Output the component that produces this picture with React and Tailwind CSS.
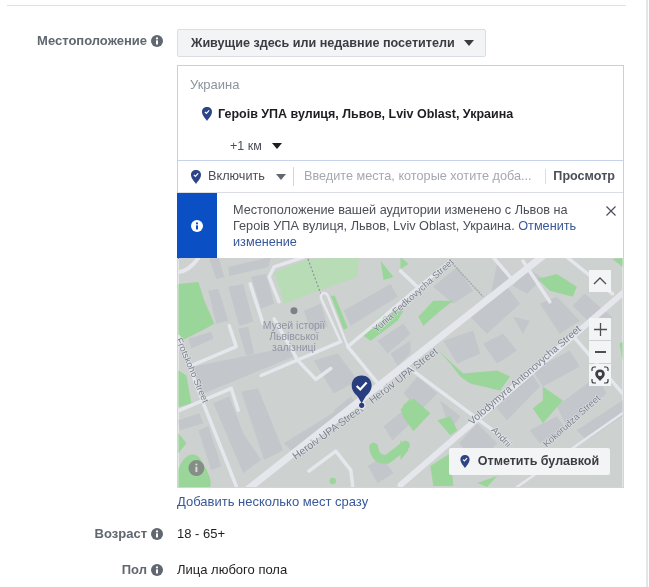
import React from 'react';

const font = { fontFamily: '"Liberation Sans", Arial, sans-serif' };

function InfoDot({ className = 'w-[12px] h-[12px] text-[#606770]', cut = 'white' }) {
  return (
    <svg viewBox="0 0 12 12" className={className}>
      <circle cx="6" cy="6" r="6" fill="currentColor" />
      <circle cx="6" cy="3.4" r="1.1" fill={cut} />
      <rect x="5" y="5.2" width="2" height="4.4" rx="0.5" fill={cut} />
    </svg>
  );
}

function Pin({ className = 'w-[10px] h-[14px]' }) {
  return (
    <svg viewBox="0 0 10 14" className={className}>
      <path d="M5 0C7.9 0 10 2 10 4.8C10 8.4 7 11 5 14C3 11 0 8.4 0 4.8C0 2 2.1 0 5 0Z" fill="#2d4486" />
      <path d="M2.9 4.9L4.4 6.4L7.2 3.4" stroke="white" strokeWidth="1.2" fill="none" />
    </svg>
  );
}

function Caret({ className = 'border-t-[#3a3d42]' }) {
  return <span className={`inline-block w-0 h-0 border-x-[5px] border-x-transparent border-t-[6px] ${className}`} />;
}

const buildings = [
  '30,33 40,31 50,63 38,66',
  '50,29 65,26 75,64 61,68',
  '31,1 40,-1 46,19 38,21',
  '50,9 93,-1 90,9 51,18',
  '73,19 88,16 96,46 83,51',
  '60,71 70,69 76,96 68,98',
  '10,81 33,74 35,81 13,91',
  '16,109 113,89 116,99 20,138',
  '63,134 80,131 105,193 86,203',
  '35,146 51,139 65,176 83,203 65,216',
  '0,163 21,156 25,166 1,173',
  '20,173 30,169 43,209 33,213',
  '106,186 166,149 176,159 116,196',
  '136,103 160,96 180,123 156,136',
  '156,153 173,139 180,148 163,159',
  '166,53 213,26 220,39 173,68',
  '126,53 143,46 150,69 133,73',
  '190,209 204,200 216,216 200,226',
  '206,169 226,153 233,166 215,183',
  '200,83 226,66 233,76 210,96',
  '213,96 233,83 233,96 220,108',
  '293,59 330,29 343,46 310,76',
  '266,83 296,73 303,96 280,106',
  '306,86 326,76 340,93 320,106',
  '336,59 353,63 346,76',
  '363,46 380,39 403,63 383,76',
  '256,29 280,9 296,33 276,46',
  '320,6 336,19 313,39',
  '356,113 393,93 403,109 366,129',
  '380,149 420,119 430,136 390,169',
  '316,146 353,113 363,129 330,163',
  '353,173 380,159 390,173 363,186',
  '240,119 260,136 243,153 226,136',
  '263,143 283,159 273,173',
  '400,173 446,143 446,159 410,183',
  '350,10 366,20 350,36 336,28',
  '408,36 436,60 420,72 396,48',
  '300,166 320,186 300,206 282,186',
];

const greens = [
  'M0 26L20 24L26 43L36 66L23 73L3 83L0 80Z',
  'M0 113L8 118L13 146L0 150Z',
  'M0 176L8 186L0 196Z',
  'M0 212C6 196 16 194 22 202C28 212 34 222 32 230H0Z',
  'M183 76L206 56L226 53L220 63L193 83Z',
  'M203 3L216 19L206 22Z',
  'M233 141L225 149L233 159Z',
  'M361 21L380 16L400 29L396 39L373 33Z',
  'M241 59L256 43L276 43L263 53L246 68Z',
  'M261 93L286 116L320 113L333 119L323 133L293 126L283 119L273 106Z',
  'M223 152L236 141L253 156L236 174L226 160Z',
  'M260 163L273 159L280 173L273 178Z',
  'M366 129L386 143L366 166L356 151L366 143Z',
  'M223 183L231 193L223 203Z',
  'M253 209L273 196L276 229L256 229Z',
  'M300 226L320 219L310 230Z',
  'M223 -1L231 6L223 11Z',
  'M436 1L446 9V0Z',
  'M443 86L446 84V103Z',
  'M153 38L157 38L170 70L166 72Z',
];

const roads = [
  { d: 'M70 232L366 -2', w: 7 },
  { d: 'M223 228L450 32', w: 6 },
  { d: 'M170 89L273 3', w: 3.5 },
  { d: 'M170 89L206 133', w: 3.5 },
  { d: 'M230 109L293 156L333 186', w: 3.5 },
  { d: 'M83 118L163 84', w: 3.5 },
  { d: 'M1 153L53 131L60 153', w: 3.5 },
  { d: 'M0 79L25 146L58 229', w: 3.5 },
  { d: 'M72 26L85 66', w: 3.5 },
  { d: 'M51 68L58 89L13 108', w: 3.5 },
  { d: 'M101 44L91 19L96 9L126 -1', w: 3.5 },
  { d: 'M96 61L120 103L138 122L153 111', w: 3.5 },
  { d: 'M163 84L143 40C143 34 148 34 150 38L170 89', w: 2.5 },
  { d: 'M131 214L158 194L173 213L175 229', w: 3.5 },
  { d: 'M316 -1L333 19', w: 3.5 },
  { d: 'M346 3L373 44', w: 3.5 },
  { d: 'M390 -1L436 36', w: 3.5 },
  { d: 'M223 13L240 29', w: 3.5 },
  { d: 'M396 78L446 136', w: 3.5 },
  { d: 'M340 230L446 156', w: 2.5 },
  { d: 'M0 14C8 14 14 8 20 0', w: 4 },
];

function MapLabel({ x, y, angle, size = 10, children }) {
  return (
    <text
      x={x}
      y={y}
      transform={`rotate(${angle} ${x} ${y})`}
      fill="#7b808c"
      fontSize={size}
      textAnchor="middle"
      stroke="#e4e6ea"
      strokeWidth="1"
      paintOrder="stroke"
      style={font}
    >
      {children}
    </text>
  );
}

function MapCanvas() {
  return (
    <svg viewBox="0 0 446 230" className="absolute inset-0 w-full h-full">
      <rect width="446" height="230" fill="#cdd1cf" />
      {buildings.map((points, i) => (
        <polygon key={i} points={points} fill="#c3c6ca" />
      ))}
      <path d="M96 14L130 1L181 -1L180 19L141 33L106 46Z" fill="#b8dcb6" />
      {greens.map((d, i) => (
        <path key={i} d={d} fill="#9ad699" />
      ))}
      <path d="M196 190Q198 204 210 202L228 188" stroke="#9ad699" strokeWidth="9" fill="none" strokeLinecap="round" />
      <circle cx="155" cy="224" r="3.2" fill="#9ad699" />
      <path d="M130 1L143 36" stroke="#8f9396" strokeWidth="1.2" strokeDasharray="2 2" />
      <path d="M273 3L306 39" stroke="#a8abae" strokeWidth="1.5" strokeDasharray="2 1" />
      {roads.map((r, i) => (
        <path key={i} d={r.d} stroke="#e5e7ed" strokeWidth={r.w} fill="none" strokeLinecap="round" strokeLinejoin="round" />
      ))}
      <circle cx="116" cy="53" r="3.5" fill="#7d8085" />
      <text x="116" y="71" textAnchor="middle" fontSize="10.5" fill="#9195a6" style={font}>Музей історії</text>
      <text x="116" y="82" textAnchor="middle" fontSize="10.5" fill="#9195a6" style={font}>Львівської</text>
      <text x="116" y="93" textAnchor="middle" fontSize="10.5" fill="#9195a6" style={font}>залізниці</text>
      <MapLabel x="152" y="178" angle={-36} size={10.5}>Heroiv UPA Street</MapLabel>
      <MapLabel x="228" y="121" angle={-38} size={10.5}>Heroiv UPA Street</MapLabel>
      <MapLabel x="238" y="40" angle={-42} size={9.5}>Yuriia Fedkovycha Street</MapLabel>
      <MapLabel x="350" y="120" angle={-41} size={10.3}>Volodymyra Antonovycha Street</MapLabel>
      <MapLabel x="397" y="166" angle={-42} size={9.5}>Kokorudza Street</MapLabel>
      <MapLabel x="11" y="114" angle={67} size={9.5}>Frotskoho Street</MapLabel>
      <MapLabel x="322" y="182" angle={46} size={9.5}>Andrii</MapLabel>
      <circle cx="18" cy="211" r="8" fill="#858d86" />
      <circle cx="18" cy="207.4" r="1.1" fill="#d6dad6" />
      <rect x="17" y="209.6" width="2" height="5.4" fill="#d6dad6" />
      <circle cx="184" cy="148" r="4" fill="#e5e7ed" />
      <path d="M184 118C177.5 118 174 123 174 128C174 133 177 136 180 139L184 146L188 139C191 136 194 133 194 128C194 123 190.5 118 184 118Z" fill="#293e7e" />
      <path d="M179 128.5L182.6 132L189 125" stroke="white" strokeWidth="2.2" fill="none" />
      <circle cx="184" cy="148" r="2.6" fill="#293e7e" />
    </svg>
  );
}

function MapControl({ children, className = '' }) {
  return (
    <div className={`w-[22px] h-[22px] bg-[#f3f4f5] flex items-center justify-center ${className}`}>
      {children}
    </div>
  );
}

function Label({ children, className = '' }) {
  return (
    <div className={`w-[156px] flex-shrink-0 flex items-center justify-end gap-[4px] text-[13px] font-bold text-[#606770] ${className}`}>
      <span>{children}</span>
      <InfoDot />
    </div>
  );
}

export default function App() {
  return (
    <div className="w-[649px] h-[587px] overflow-hidden bg-white flex blur-[0.5px]" style={font}>
      <div className="w-[646px] h-full flex-shrink-0 pl-[7px] pt-[5px]">
        <div className="w-[619px] h-px bg-[#dfe1e5]" />

        <div className="flex mt-[23px]">
          <Label className="h-[24px]">Местоположение</Label>
          <div className="ml-[14px] w-[447px]">
            <button className="h-[28px] w-[309px] pl-[13px] flex items-center gap-[9px] rounded-[2px] bg-[#f3f4f6] border border-[#dadde1] text-[12.6px] font-bold text-[#3a3d42]">
              <span>Живущие здесь или недавние посетители</span>
              <Caret />
            </button>

            <div className="mt-[8px] border border-[#ccd0d5] border-b-0">
              <div className="h-[94px] pl-[12px] pt-[12px]">
                <div className="text-[13px] leading-[14px] text-[#8d949e]">Украина</div>
                <div className="flex items-center gap-[6px] mt-[15px] ml-[12px] h-[14px]">
                  <Pin />
                  <span className="text-[12.5px] font-bold text-[#1c1e21]">Героів УПА вулиця, Львов, Lviv Oblast, Украина</span>
                </div>
                <div className="flex items-center gap-[10px] mt-[18px] ml-[40px] h-[14px]">
                  <span className="text-[12.5px] text-[#4b4f56]">+1 км</span>
                  <Caret className="border-t-[#1c1e21]" />
                </div>
              </div>

              <div className="h-[32px] border-t border-[#c8d2e8] flex items-center pl-[13px] pr-[8px]">
                <Pin className="w-[10px] h-[14px]" />
                <span className="ml-[7px] text-[12.7px] text-[#4b4f56]">Включить</span>
                <Caret className="ml-[11px] border-t-[#606770]" />
                <span className="ml-[7px] w-px h-[19px] bg-[#ccd7ea]" />
                <span className="ml-[10px] flex-1 text-[12.7px] text-[#a4a8af] whitespace-nowrap">Введите места, которые хотите доба...</span>
                <span className="w-px h-[15px] bg-[#dadde1] mr-[7px]" />
                <span className="text-[12.6px] font-bold text-[#4b4f56]">Просмотр</span>
              </div>

              <div className="h-[67px] border-t border-[#dadde1] flex">
                <div className="w-[40px] -ml-px bg-[#0b4fc4] flex items-center justify-center">
                  <InfoDot className="w-[12px] h-[12px] text-white" cut="#0b4fc4" />
                </div>
                <div className="w-[350px] ml-[16px] pt-[9px] text-[12.7px] leading-[16px] text-[#4b4f56]">
                  Местоположение вашей аудитории изменено с Львов на Героів УПА вулиця, Львов, Lviv Oblast, Украина.{' '}
                  <span className="text-[#385898]">Отменить изменение</span>
                </div>
                <svg viewBox="0 0 10 10" className="w-[10px] h-[10px] ml-[23px] mt-[13px]">
                  <path d="M0.5 0.5L9.5 9.5M9.5 0.5L0.5 9.5" stroke="#4b4f56" strokeWidth="1.2" />
                </svg>
              </div>
            </div>

            <div className="relative h-[230px] -mt-px border border-[#ccd5e6] border-t-0 overflow-hidden">
              <MapCanvas />
              <div className="absolute right-[12px] top-[12px] flex flex-col">
                <MapControl>
                  <svg viewBox="0 0 14 8" className="w-[14px] h-[8px]"><path d="M1 7L7 1L13 7" stroke="#4b4f56" strokeWidth="1.3" fill="none" /></svg>
                </MapControl>
                <MapControl className="mt-[26px]">
                  <svg viewBox="0 0 13 13" className="w-[13px] h-[13px]"><path d="M6.5 0V13M0 6.5H13" stroke="#4b4f56" strokeWidth="1.3" /></svg>
                </MapControl>
                <MapControl className="mt-px">
                  <span className="w-[11px] h-[1.5px] bg-[#4b4f56]" />
                </MapControl>
                <MapControl className="mt-px">
                  <svg viewBox="0 0 18 18" className="w-[18px] h-[18px]">
                    <path d="M1 5V3A2 2 0 0 1 3 1H5M13 1H15A2 2 0 0 1 17 3V5M1 13V15A2 2 0 0 0 3 17H5M13 17H15A2 2 0 0 0 17 15V13" stroke="#3a3d42" strokeWidth="1.2" fill="none" />
                    <path fillRule="evenodd" d="M9 3.5C6.2 3.5 4.2 5.4 4.2 8C4.2 10.6 7 12.8 9 15C11 12.8 13.8 10.6 13.8 8C13.8 5.4 11.8 3.5 9 3.5ZM9 6A2.1 2.1 0 1 1 9 10.2A2.1 2.1 0 1 1 9 6Z" fill="#3a3d42" />
                  </svg>
                </MapControl>
              </div>
              <button className="absolute right-[13px] bottom-[12px] h-[27px] w-[161px] rounded-[2px] bg-[#f3f4f5] flex items-center justify-center gap-[8px] text-[12.5px] font-bold text-[#3a3d42]">
                <Pin className="w-[10px] h-[13px]" />
                <span>Отметить булавкой</span>
              </button>
            </div>

            <div className="mt-[7px] text-[13px] leading-[14px] text-[#385898]">Добавить несколько мест сразу</div>
          </div>
        </div>

        <div className="flex items-center mt-[18px] h-[14px]">
          <Label>Возраст</Label>
          <span className="ml-[14px] text-[13px] text-[#1c1e21]">18 - 65+</span>
        </div>
        <div className="flex items-center mt-[22px] h-[14px]">
          <Label>Пол</Label>
          <span className="ml-[14px] text-[13px] text-[#1c1e21]">Лица любого пола</span>
        </div>
      </div>
      <div className="w-[2px] h-full bg-[#e4e5e8]" />
    </div>
  );
}
